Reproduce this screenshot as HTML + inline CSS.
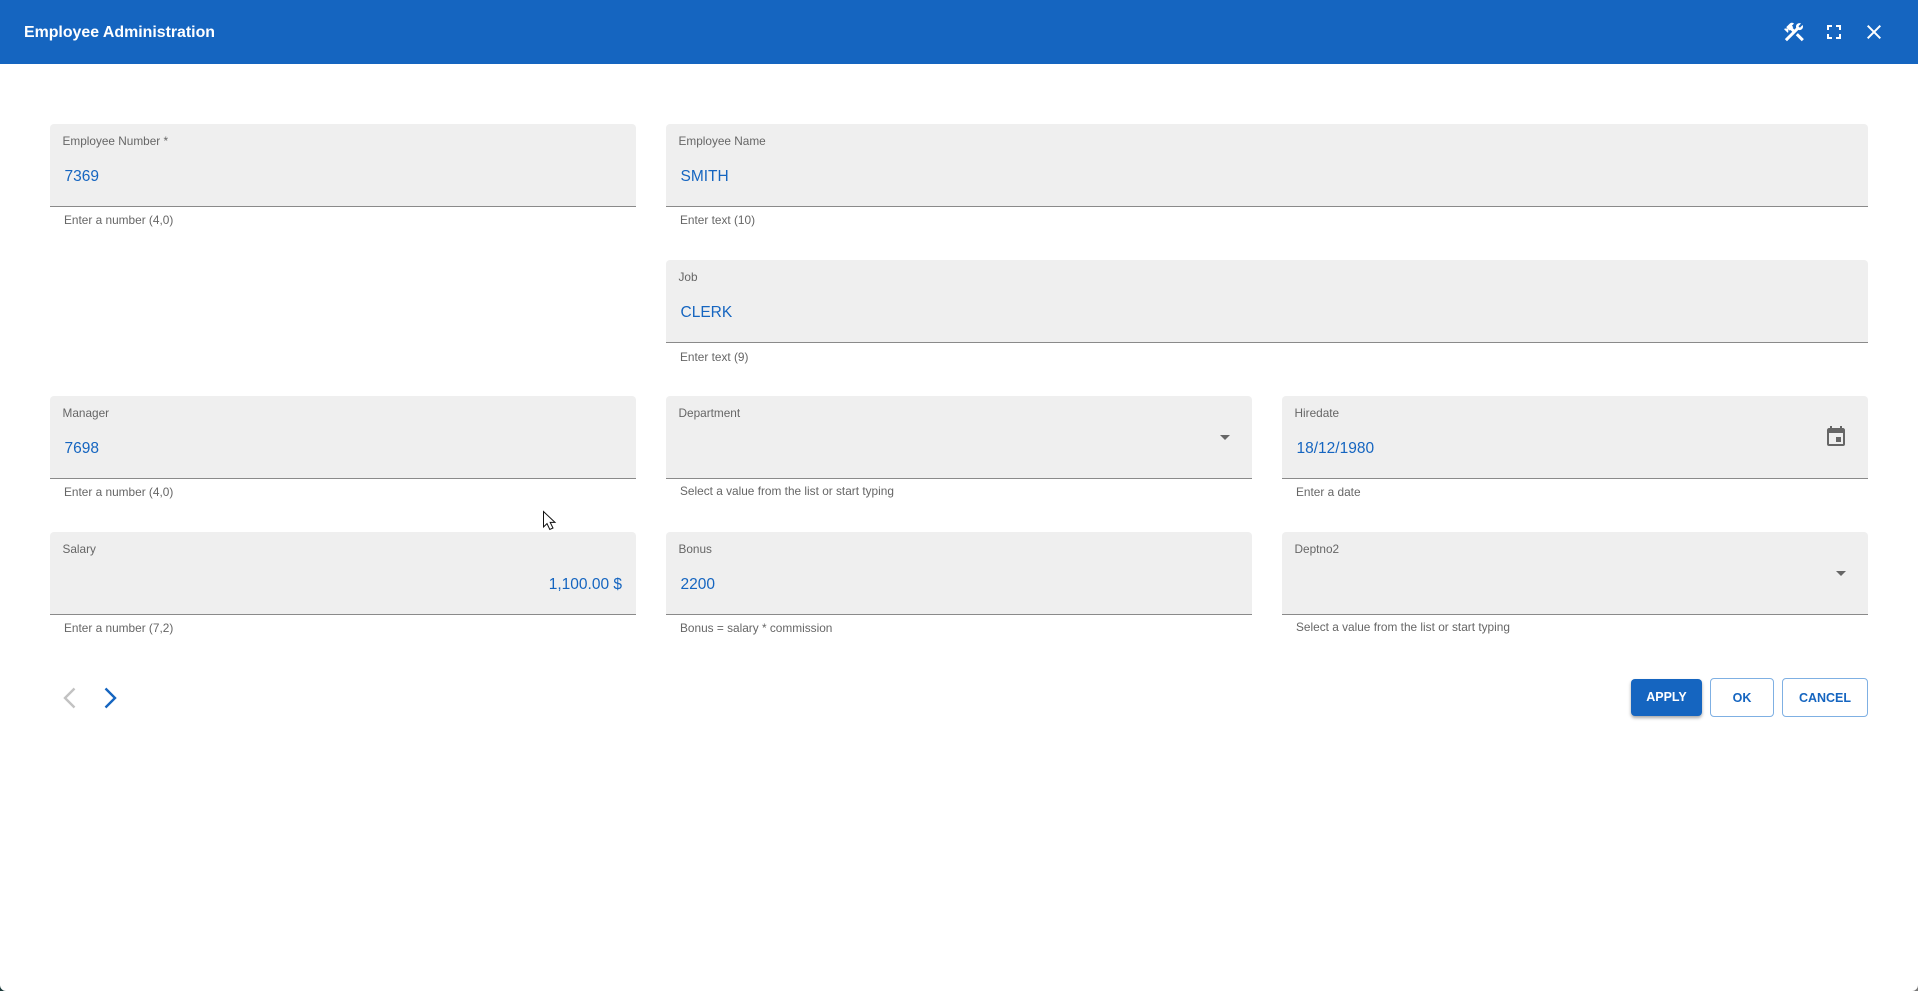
<!DOCTYPE html>
<html lang="en">
<head>
<meta charset="utf-8">
<title>Employee Administration</title>
<style>
html,body{margin:0;padding:0;background:#fff}
body{width:1918px;height:991px;position:relative;overflow:hidden;font-family:"Liberation Sans",Arial,sans-serif}
.hdr{position:absolute;left:0;top:0;width:1918px;height:64px;background:#1565c0}
.title{position:absolute;left:24px;top:23px;line-height:20px;font-size:15.9px;font-weight:bold;color:#fff;white-space:nowrap}
svg{position:absolute;display:block}
.f{position:absolute;background:#efefef;border-radius:4px 4px 0 0;border-bottom:1px solid #8a8a8a;height:82px;box-sizing:content-box}
.l{position:absolute;left:12.5px;top:10px;line-height:14px;font-size:11.8px;color:#666;white-space:nowrap}
.v{position:absolute;left:14.5px;top:43px;line-height:20px;font-size:15.5px;color:#1565c0;white-space:nowrap}
.v.r{left:auto;right:14px}
.h{position:absolute;line-height:14px;font-size:11.85px;color:#666;white-space:nowrap}
.b{position:absolute;box-sizing:border-box;border-radius:4px;text-align:center;font-size:12.5px;font-weight:bold;white-space:nowrap}
.o{border:1px solid #7fb0e3;color:#1565c0;background:#fff;height:39px;top:678px;line-height:38px}
.a{background:#1565c0;color:#fff;height:37px;top:679px;line-height:37px;left:1631px;width:71px;box-shadow:0 2px 3px rgba(0,0,0,.35)}
</style>
</head>
<body>
<div class="hdr"></div>
<div class="title">Employee Administration</div>

<svg style="left:1782px;top:20px" width="24" height="24" viewBox="0 0 24 24" fill="#fff"><path d="M13.78 15.3L19.78 21.3L21.89 19.14L15.89 13.14L13.78 15.3M17.5 10.1C17.11 10.1 16.69 10.05 16.36 9.91L4.97 21.25L2.86 19.14L10.27 11.74L8.5 9.96L7.78 10.66L6.33 9.25V12.11L5.63 12.81L2.11 9.25L2.81 8.55H5.62L4.22 7.14L7.78 3.58C8.95 2.41 10.83 2.41 12 3.58L9.89 5.74L11.3 7.14L10.59 7.85L12.38 9.63L14.2 7.75C14.06 7.42 14 7 14 6.63C14 4.66 15.56 3.11 17.5 3.11C18.09 3.11 18.61 3.25 19.08 3.53L16.41 6.2L17.91 7.7L20.58 5.03C20.86 5.5 21 6 21 6.63C21 8.59 19.45 10.1 17.5 10.1Z"/></svg>
<svg style="left:1822px;top:20px" width="24" height="24" viewBox="0 0 24 24" fill="#fff"><path d="M5,5H10V7H7V10H5V5M14,5H19V10H17V7H14V5M17,14H19V19H14V17H17V14M10,17V19H5V14H7V17H10Z"/></svg>
<svg style="left:1862px;top:20px" width="24" height="24" viewBox="0 0 24 24" fill="#fff"><path d="M19,6.41L17.59,5L12,10.59L6.41,5L5,6.41L10.59,12L5,17.59L6.41,19L12,13.41L17.59,19L19,17.59L13.41,12L19,6.41Z"/></svg>

<div class="f" style="left:50px;top:124px;width:586px"><div class="l">Employee Number *</div><div class="v">7369</div></div>
<div class="h" style="left:64px;top:213px">Enter a number (4,0)</div>

<div class="f" style="left:666px;top:124px;width:1202px"><div class="l">Employee Name</div><div class="v">SMITH</div></div>
<div class="h" style="left:680px;top:213px">Enter text (10)</div>

<div class="f" style="left:666px;top:260px;width:1202px"><div class="l">Job</div><div class="v">CLERK</div></div>
<div class="h" style="left:680px;top:349.5px">Enter text (9)</div>

<div class="f" style="left:50px;top:396px;width:586px"><div class="l">Manager</div><div class="v">7698</div></div>
<div class="h" style="left:64px;top:485px">Enter a number (4,0)</div>

<div class="f" style="left:666px;top:396px;width:586px"><div class="l">Department</div></div>
<svg style="left:1213px;top:425px" width="24" height="24" viewBox="0 0 24 24" fill="#666"><path d="M7,10L12,15L17,10H7Z"/></svg>
<div class="h" style="left:680px;top:484px">Select a value from the list or start typing</div>

<div class="f" style="left:1282px;top:396px;width:586px"><div class="l">Hiredate</div><div class="v">18/12/1980</div></div>
<svg style="left:1824px;top:425px" width="24" height="24" viewBox="0 0 24 24" fill="#666"><path d="M19,19H5V8H19M16,1V3H8V1H6V3H5C3.89,3 3,3.89 3,5V19A2,2 0 0,0 5,21H19A2,2 0 0,0 21,19V5C21,3.89 20.1,3 19,3H18V1M17,12H12V17H17V12Z"/></svg>
<div class="h" style="left:1296px;top:485px">Enter a date</div>

<div class="f" style="left:50px;top:532px;width:586px"><div class="l">Salary</div><div class="v r">1,100.00 $</div></div>
<div class="h" style="left:64px;top:621px">Enter a number (7,2)</div>

<div class="f" style="left:666px;top:532px;width:586px"><div class="l">Bonus</div><div class="v">2200</div></div>
<div class="h" style="left:680px;top:621px">Bonus = salary * commission</div>

<div class="f" style="left:1282px;top:532px;width:586px"><div class="l">Deptno2</div></div>
<svg style="left:1829px;top:561px" width="24" height="24" viewBox="0 0 24 24" fill="#666"><path d="M7,10L12,15L17,10H7Z"/></svg>
<div class="h" style="left:1296px;top:620px">Select a value from the list or start typing</div>

<svg style="left:58px;top:682px" width="24" height="32" viewBox="0 0 24 32" fill="none" stroke="#c2c2c2" stroke-width="2.4"><path d="M16.5,6.5L7,16L16.5,25.5"/></svg>
<svg style="left:98px;top:682px" width="24" height="32" viewBox="0 0 24 32" fill="none" stroke="#1565c0" stroke-width="2.4"><path d="M7.5,6.5L17,16L7.5,25.5"/></svg>

<div class="b a">APPLY</div>
<div class="b o" style="left:1710px;width:64px">OK</div>
<div class="b o" style="left:1782px;width:86px">CANCEL</div>

<svg style="left:542px;top:510px" width="16" height="22" viewBox="0 0 16 22"><path d="M1.5,1.5V17L5,13.6L7.8,19.5L11,18L8.2,12.4H13Z" fill="#fff" stroke="#111" stroke-width="1"/></svg>

<svg style="left:0;top:985px" width="6" height="6" viewBox="0 0 6 6"><path d="M0,0A6,6 0 0,0 6,6H0Z" fill="#1d3a3a"/></svg>
<svg style="left:1912px;top:985px" width="6" height="6" viewBox="0 0 6 6"><path d="M6,0A6,6 0 0,1 0,6H6Z" fill="#777"/></svg>
</body>
</html>
